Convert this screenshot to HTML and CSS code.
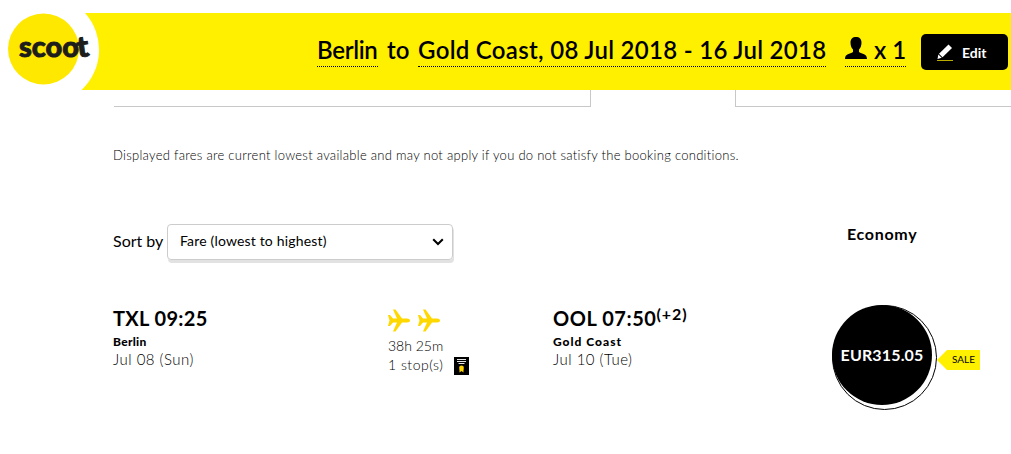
FILE: index.html
```html
<!DOCTYPE html>
<html lang="en">
<head>
  <meta charset="UTF-8" />
  <meta name="viewport" content="width=device-width, initial-scale=1.0" />
  <title>Scoot - Select flights</title>
  <link rel="stylesheet" href="styles.css">
</head>
<body>
  <header class="header">
    <svg class="logo" width="100" height="77" viewBox="0 13 100 77">
      <path d="M0 13 H85 A55 55 0 0 1 81.500 90 H0 Z" fill="#fff" />
      <circle cx="43.500" cy="49" r="35.500" fill="#ffe800" />
      <text class="logo-text" x="19" y="56.500" textLength="60" lengthAdjust="spacingAndGlyphs">scoo</text>
      <text class="logo-text" x="77" y="57" textLength="12" lengthAdjust="spacingAndGlyphs" transform="rotate(-8 81 50)">t</text>
    </svg>
    <div class="trip">
      <span class="link city">Berlin</span>
      <span class="to">to</span>
      <span class="link route">Gold Coast, 08 Jul 2018 - 16 Jul 2018</span>
      <span class="link pax">
        <svg width="22" height="22" viewBox="0 0 22 22">
          <path d="M11 0 C7.500 0 5.500 2 5.500 5.500 C5.500 9 6.500 11 8 12.500 V15 C5 17 0 16.500 0 22 H22 C22 16.500 17 17 14 15 V12.500 C15.500 11 16.500 9 16.500 5.500 C16.500 2 14.500 0 11 0 Z" />
        </svg>
        <span>x 1</span>
      </span>
    </div>
    <button class="edit-btn">
      <svg width="16" height="18" viewBox="0 0 16 18">
        <path d="M11.500 0.500 L15 4 L5.500 13.200 L2 9.800 Z" fill="#fff" />
        <path d="M1.300 10.500 L4.700 13.800 L0.500 15 Z" fill="#fff" />
        <path d="M0 16.500 H16" stroke="#b9ad00" stroke-width="1" />
      </svg>
      <span>Edit</span>
    </button>
  </header>

  <div class="tabs">
    <div class="tab tab-prev"></div>
    <div class="tab tab-next"></div>
  </div>

  <main>
    <p class="note">Displayed fares are current lowest available and may not apply if you do not satisfy the booking conditions.</p>

    <div class="sort-row">
      <span class="sort-label">Sort by</span>
      <div class="select">
        <span>Fare (lowest to highest)</span>
        <svg width="12" height="8" viewBox="0 0 12 8">
          <path d="M1.200 1.200 L6 6 L10.800 1.200" fill="none" stroke="#000" stroke-width="2" />
        </svg>
      </div>
      <div class="fare-class">Economy</div>
    </div>

    <section class="flight">
      <div class="stop">
        <div class="time">TXL 09:25</div>
        <div class="place">Berlin</div>
        <div class="date">Jul 08 (Sun)</div>
      </div>

      <div class="duration">
        <div class="planes">
          <svg width="22" height="23" viewBox="0 0 22 23">
            <path d="M0 6 H2 L5 9.500 H9 L5 0.500 H7.500 L14 9.500 H19 C21 9.500 22 10.500 22 11.500 C22 12.500 21 13.500 19 13.500 H14 L7.500 22.500 H5 L9 13.500 H5 L2 17 H0 L1.500 11.500 Z" />
          </svg>
          <svg width="22" height="23" viewBox="0 0 22 23">
            <path d="M0 6 H2 L5 9.500 H9 L5 0.500 H7.500 L14 9.500 H19 C21 9.500 22 10.500 22 11.500 C22 12.500 21 13.500 19 13.500 H14 L7.500 22.500 H5 L9 13.500 H5 L2 17 H0 L1.500 11.500 Z" />
          </svg>
        </div>
        <div class="hours">38h 25m</div>
        <div class="stops">
          <span>1 stop(s)</span>
          <svg width="15" height="18" viewBox="0 0 15 18">
            <rect width="15" height="18" />
            <path d="M3 2.500 H12 M3 4.500 H12 M4.500 6.500 H10.500" stroke="#fff" stroke-width="0.900" />
            <circle cx="7.500" cy="11" r="2.400" fill="#ffd400" />
            <path d="M5.500 12 H9.500 V15.500 L7.500 14 L5.500 15.500 Z" fill="#ffd400" />
          </svg>
        </div>
      </div>

      <div class="stop arrive">
        <div class="time">OOL 07:50<sup>(+2)</sup></div>
        <div class="place wide">Gold Coast</div>
        <div class="date">Jul 10 (Tue)</div>
      </div>

      <div class="fare">
        <div class="price"><span>EUR315.05</span></div>
        <div class="sale">SALE</div>
      </div>
    </section>
  </main>
</body>
</html>
```
FILE: styles.css
```css
:root {
  --yellow: #fff000;
  --line: #c8c8c8;
}

* {
  box-sizing: border-box;
}

body {
  margin: 0;
  padding-top: 13px;
  height: 454px;
  overflow: hidden;
  font-family: Lato, "Liberation Sans", sans-serif;
  background: #fff;
  color: #000;
  white-space: nowrap;
}

svg {
  display: block;
  flex-shrink: 0;
}

/* Header */

.header {
  display: flex;
  height: 77px;
  background: var(--yellow);
}

.logo-text {
  font-family: Lato, sans-serif;
  font-size: 29px;
  font-weight: 900;
  fill: #1d1d1b;
  stroke: #1d1d1b;
  stroke-width: 0.9px;
}

.trip {
  display: flex;
  margin-left: 217px;
  padding-top: 20px;
  font-size: 24px;
  font-weight: 600;
  line-height: 34px;
}

.link {
  height: 34px;
  border-bottom: 1px dotted #000;
}

.city {
  width: 61px;
  letter-spacing: -0.3px;
}

.to {
  width: 22px;
  margin: 0 9px 0 9px;
}

.route {
  width: 408px;
  letter-spacing: 0.3px;
}

.pax {
  display: flex;
  gap: 7px;
  width: 61px;
  margin-left: 19px;
}

.pax svg {
  margin-top: 4px;
}

.edit-btn {
  display: flex;
  align-items: center;
  gap: 9px;
  width: 87px;
  height: 36px;
  margin: 21px 0 0 15px;
  padding: 2px 0 0 16px;
  border: 0;
  border-radius: 5px;
  background: #000;
  color: #fff;
  font-family: inherit;
  font-size: 14px;
  font-weight: 700;
}

.edit-btn span {
  margin-top: -1px;
}

/* Tabs cut off by the header */

.tabs {
  display: flex;
  justify-content: space-between;
  height: 17px;
  margin-left: 114px;
}

.tab {
  border-bottom: 1px solid var(--line);
}

.tab-prev {
  width: 477px;
  border-right: 1px solid var(--line);
}

.tab-next {
  width: 276px;
  border-left: 1px solid var(--line);
}

main {
  padding-left: 113px;
}

.note {
  margin: 38px 0 0;
  font-size: 13px;
  font-weight: 300;
  line-height: 20px;
  letter-spacing: 0.28px;
}

/* Sort */

.sort-row {
  display: flex;
  margin-top: 59px;
  height: 37px;
}

.sort-label {
  width: 54px;
  font-size: 16px;
  line-height: 33px;
}

.select {
  display: flex;
  justify-content: space-between;
  align-items: center;
  width: 286px;
  height: 36px;
  padding: 0 8px 3px 12px;
  border: 1px solid #ccc;
  border-radius: 4px;
  box-shadow: 1px 3px 0 #e2e2e2;
  font-size: 14px;
  letter-spacing: 0.17px;
}

.select svg {
  margin-top: 3px;
}

.fare-class {
  margin-left: 394px;
  font-size: 16px;
  font-weight: 700;
  line-height: 20px;
  letter-spacing: 0.7px;
}

/* Flight */

.flight {
  display: flex;
  margin-top: 44px;
}

.stop {
  width: 275px;
}

.time {
  height: 28px;
  font-size: 20px;
  font-weight: 700;
  line-height: 26px;
  letter-spacing: 0.35px;
}

.arrive .time {
  letter-spacing: 0.55px;
}

.time sup {
  font-size: 16px;
  line-height: 0;
  letter-spacing: 0.9px;
  vertical-align: 6px;
}

.place {
  font-size: 12px;
  font-weight: 900;
  line-height: 18px;
  letter-spacing: 0.3px;
}

.place.wide {
  letter-spacing: 1px;
}

.date {
  font-size: 15px;
  font-weight: 300;
  line-height: 17px;
  letter-spacing: 0.5px;
}

.duration {
  width: 165px;
  padding-top: 4px;
  font-size: 14px;
  font-weight: 300;
  line-height: 19px;
}

.planes {
  display: flex;
  gap: 8px;
  height: 27px;
  fill: #ffd800;
}

.stops {
  display: flex;
}

.stops span {
  width: 66px;
  letter-spacing: 0.5px;
}

.stops svg {
  margin-top: 2px;
}

.arrive {
  width: 279px;
}

.fare {
  display: flex;
}

.price {
  display: flex;
  align-items: center;
  justify-content: center;
  position: relative;
  width: 100px;
  height: 100px;
  padding-bottom: 1px;
  border-radius: 50%;
  background: #000;
  color: #fff;
  font-size: 16px;
  font-weight: 700;
  letter-spacing: 0.15px;
}

/* offset ring behind the price */
.price::before {
  content: "";
  position: absolute;
  z-index: -1;
  top: 0;
  left: 0;
  width: 103px;
  height: 103px;
  border: 1px solid #000;
  border-radius: 50%;
}

.sale {
  width: 43px;
  height: 20px;
  margin: 45px 0 0 5px;
  padding-left: 15px;
  background: var(--yellow);
  clip-path: polygon(0 50%, 10px 0, 100% 0, 100% 100%, 10px 100%);
  font-size: 10px;
  line-height: 19px;
}
```
